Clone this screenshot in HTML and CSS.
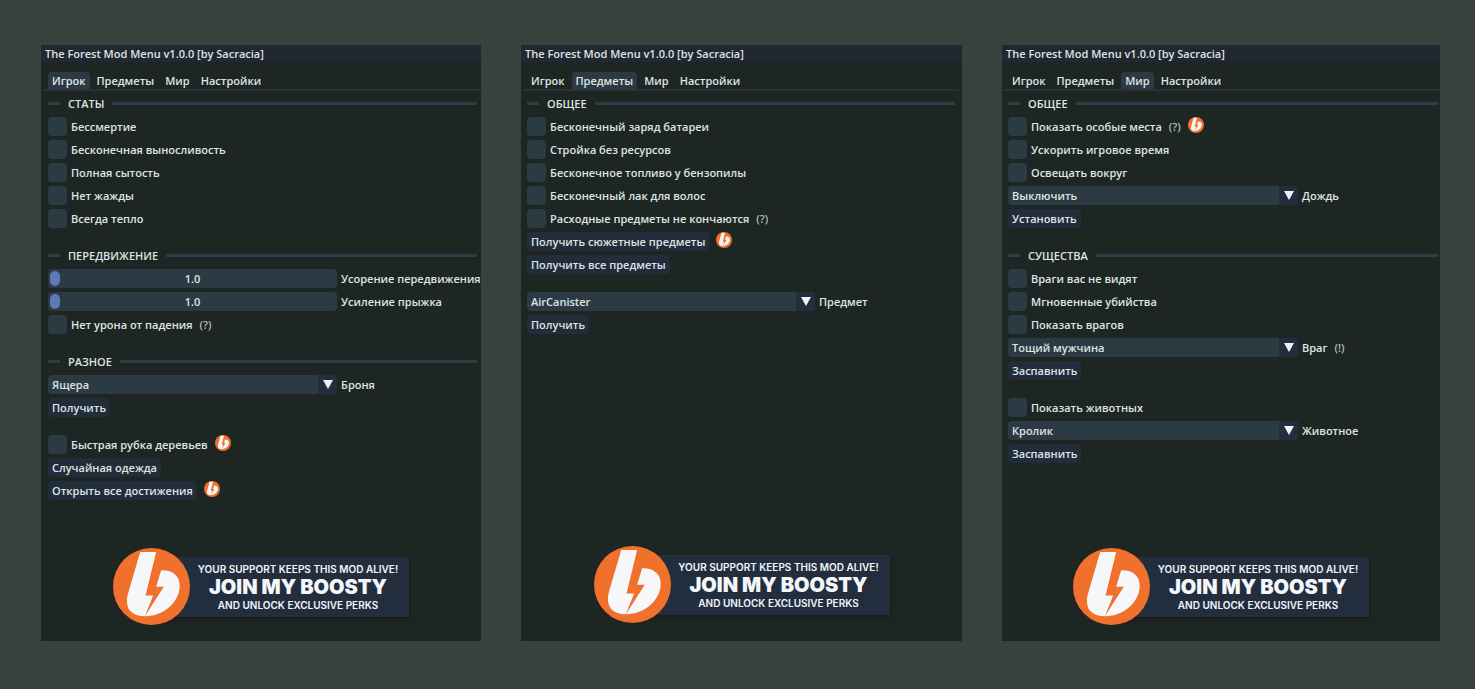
FILE: index.html
```html
<!DOCTYPE html>
<html lang="ru">
<head>
<meta charset="utf-8">
<title>The Forest Mod Menu</title>
<link rel="stylesheet" href="styles.css">
</head>
<body>
<svg class="defs" aria-hidden="true">
  <symbol id="boosty" viewBox="0 0 232 232">
    <circle cx="116" cy="116" r="116" fill="#f0702c"/>
    <path fill="#f6f7f9" d="M82 12H130L98 143H121L96 206C62 205 42 191 42 160C42 149 44 141 48 128Z"/>
    <path fill="#f6f7f9" d="M145 67C181 66 201 84 201 114C201 160 157 205 96 206L153 117H130Z"/>
  </symbol>
  <symbol id="arrow" viewBox="0 0 10 9"><path fill="#edf2f8" d="M0 0H10L5 9Z"/></symbol>
</svg>
<main class="board">

  <section class="panel player">
    <h1 class="title">The Forest Mod Menu v1.0.0 [by Sacracia]</h1>
    <nav class="tabs">
      <button class="tab active">Игрок</button><button class="tab">Предметы</button><button class="tab">Мир</button><button class="tab">Настройки</button>
    </nav>
    <div class="content">
      <h2 class="sep">СТАТЫ</h2>
      <label class="row"><input type="checkbox" class="check">Бессмертие</label>
      <label class="row"><input type="checkbox" class="check">Бесконечная выносливость</label>
      <label class="row"><input type="checkbox" class="check">Полная сытость</label>
      <label class="row"><input type="checkbox" class="check">Нет жажды</label>
      <label class="row"><input type="checkbox" class="check">Всегда тепло</label>

      <h2 class="sep spaced">ПЕРЕДВИЖЕНИЕ</h2>
      <div class="field">
        <div class="frame"><input id="speed" class="slider" type="range" min="1" max="10" step="0.1" value="1"><output class="value" for="speed">1.0</output></div>
        <label for="speed">Усорение передвижения</label>
      </div>
      <div class="field">
        <div class="frame"><input id="jump" class="slider" type="range" min="1" max="10" step="0.1" value="1"><output class="value" for="jump">1.0</output></div>
        <label for="jump">Усиление прыжка</label>
      </div>
      <label class="row"><input type="checkbox" class="check">Нет урона от падения<span class="hint">(?)</span></label>

      <h2 class="sep spaced">РАЗНОЕ</h2>
      <div class="field">
        <div class="frame"><select id="armor" class="select"><option>Ящера</option></select><span class="drop"><svg><use href="#arrow"/></svg></span></div>
        <label for="armor">Броня</label>
      </div>
      <div class="row"><button class="btn">Получить</button></div>
      <label class="row spaced"><input type="checkbox" class="check">Быстрая рубка деревьев<svg class="badge"><use href="#boosty"/></svg></label>
      <div class="row"><button class="btn">Случайная одежда</button></div>
      <div class="row"><button class="btn">Открыть все достижения</button><svg class="badge"><use href="#boosty"/></svg></div>
    </div>
    <a class="banner" href="#">
      <svg class="logo"><use href="#boosty"/></svg>
      <span class="plate"><span class="small">YOUR SUPPORT KEEPS THIS MOD ALIVE!</span><strong class="big">JOIN MY BOOSTY</strong><span class="small">AND UNLOCK EXCLUSIVE PERKS</span></span>
    </a>
  </section>

  <section class="panel items">
    <h1 class="title">The Forest Mod Menu v1.0.0 [by Sacracia]</h1>
    <nav class="tabs">
      <button class="tab">Игрок</button><button class="tab active">Предметы</button><button class="tab">Мир</button><button class="tab">Настройки</button>
    </nav>
    <div class="content">
      <h2 class="sep">ОБЩЕЕ</h2>
      <label class="row"><input type="checkbox" class="check">Бесконечный заряд батареи</label>
      <label class="row"><input type="checkbox" class="check">Стройка без ресурсов</label>
      <label class="row"><input type="checkbox" class="check">Бесконечное топливо у бензопилы</label>
      <label class="row"><input type="checkbox" class="check">Бесконечный лак для волос</label>
      <label class="row"><input type="checkbox" class="check">Расходные предметы не кончаются<span class="hint">(?)</span></label>
      <div class="row"><button class="btn">Получить сюжетные предметы</button><svg class="badge"><use href="#boosty"/></svg></div>
      <div class="row"><button class="btn">Получить все предметы</button></div>
      <div class="field spaced">
        <div class="frame"><select id="item" class="select"><option>AirCanister</option></select><span class="drop"><svg><use href="#arrow"/></svg></span></div>
        <label for="item">Предмет</label>
      </div>
      <div class="row"><button class="btn">Получить</button></div>
    </div>
    <a class="banner" href="#">
      <svg class="logo"><use href="#boosty"/></svg>
      <span class="plate"><span class="small">YOUR SUPPORT KEEPS THIS MOD ALIVE!</span><strong class="big">JOIN MY BOOSTY</strong><span class="small">AND UNLOCK EXCLUSIVE PERKS</span></span>
    </a>
  </section>

  <section class="panel world">
    <h1 class="title">The Forest Mod Menu v1.0.0 [by Sacracia]</h1>
    <nav class="tabs">
      <button class="tab">Игрок</button><button class="tab">Предметы</button><button class="tab active">Мир</button><button class="tab">Настройки</button>
    </nav>
    <div class="content">
      <h2 class="sep">ОБЩЕЕ</h2>
      <label class="row"><input type="checkbox" class="check">Показать особые места<span class="hint">(?)</span><svg class="badge"><use href="#boosty"/></svg></label>
      <label class="row"><input type="checkbox" class="check">Ускорить игровое время</label>
      <label class="row"><input type="checkbox" class="check">Освещать вокруг</label>
      <div class="field">
        <div class="frame"><select id="rain" class="select"><option>Выключить</option></select><span class="drop"><svg><use href="#arrow"/></svg></span></div>
        <label for="rain">Дождь</label>
      </div>
      <div class="row"><button class="btn">Установить</button></div>

      <h2 class="sep spaced">СУЩЕСТВА</h2>
      <label class="row"><input type="checkbox" class="check">Враги вас не видят</label>
      <label class="row"><input type="checkbox" class="check">Мгновенные убийства</label>
      <label class="row"><input type="checkbox" class="check">Показать врагов</label>
      <div class="field">
        <div class="frame"><select id="enemy" class="select"><option>Тощий мужчина</option></select><span class="drop"><svg><use href="#arrow"/></svg></span></div>
        <label for="enemy">Враг<span class="hint">(!)</span></label>
      </div>
      <div class="row"><button class="btn">Заспавнить</button></div>
      <label class="row spaced"><input type="checkbox" class="check">Показать животных</label>
      <div class="field">
        <div class="frame"><select id="animal" class="select"><option>Кролик</option></select><span class="drop"><svg><use href="#arrow"/></svg></span></div>
        <label for="animal">Животное</label>
      </div>
      <div class="row"><button class="btn">Заспавнить</button></div>
    </div>
    <a class="banner" href="#">
      <svg class="logo"><use href="#boosty"/></svg>
      <span class="plate"><span class="small">YOUR SUPPORT KEEPS THIS MOD ALIVE!</span><strong class="big">JOIN MY BOOSTY</strong><span class="small">AND UNLOCK EXCLUSIVE PERKS</span></span>
    </a>
  </section>

</main>
</body>
</html>
```
FILE: styles.css
```css
* { box-sizing: border-box; }

body {
  margin: 0;
  background: #37423e;
  color: #dde5e3;
  font: 600 11px/19px "Open Sans", "Noto Sans", sans-serif;
}

button, select, input { font: inherit; color: inherit; margin: 0; }

.defs { position: absolute; width: 0; height: 0; }

.board {
  min-height: 100vh;
  padding: 45px 35px 48px 41px;
  display: grid;
  grid-template-columns: minmax(0, 440fr) minmax(0, 441fr) minmax(0, 438fr);
  gap: 40px;
}

.panel {
  background: #1e2623;
  display: flex;
  flex-direction: column;
}

.title {
  margin: 0 0 10px;
  padding: 0 4px;
  background: #212831;
  font: inherit;
  line-height: 17px;
}

.tabs {
  margin-left: 2px;
  padding-left: 4px;
  display: flex;
  gap: 3px;
  border-bottom: 2px solid #29323a;
}

.tab {
  padding: 0 4px;
  border: 0;
  border-radius: 4px 4px 0 0;
  background: none;
  line-height: 17px;
}

.tab.active { background: #2d3a45; }

.content {
  padding: 3px 2px 16px 6px;
  display: flex;
  flex-direction: column;
  gap: 4px;
  white-space: nowrap;
}

.player .tabs { margin-left: 3px; }
.player .content { padding-left: 7px; padding-right: 4px; }
.items .tabs { margin-right: 3px; }
.items .content { padding-right: 7px; }

.spaced { margin-top: 14px; }

.sep {
  margin-bottom: 0;
  font: inherit;
  display: flex;
  align-items: center;
  gap: 8px;
}
.sep:not(.spaced) { margin-top: 0; }
.sep::before, .sep::after {
  content: "";
  height: 3px;
  background: #2f3b46;
}
.sep::before { width: 12px; }
.sep::after { flex: 1; }

.row { display: flex; align-items: center; }

.check {
  appearance: none;
  width: 19px;
  height: 19px;
  margin-right: 4px;
  border-radius: 4px;
  background: #2c3b43;
}
.check:checked { box-shadow: inset 0 0 0 5px #2c3b43; background: #5d7ab8; }

.hint { margin-left: 7px; color: #b3bbb9; }

.badge {
  width: 16px;
  height: 16px;
  margin-left: 7px;
  align-self: flex-start;
}

.btn {
  padding: 0 4px;
  border: 0;
  border-radius: 4px;
  background: #222c3a;
}

.field {
  display: grid;
  grid-template-columns: minmax(0, 1fr) 136px;
  gap: 4px;
}

.frame {
  position: relative;
  display: flex;
  height: 19px;
  border-radius: 4px;
  background: #2c3b43;
  overflow: hidden;
}

.select {
  appearance: none;
  flex: 1;
  padding: 0 23px 0 4px;
  border: 0;
  background: none;
}

.drop {
  position: absolute;
  inset: 0 0 0 auto;
  width: 19px;
  display: grid;
  place-items: center;
  background: #222e3e;
  pointer-events: none;
}
.drop svg { width: 10px; height: 9px; }

.slider {
  appearance: none;
  flex: 1;
  min-width: 0;
  padding: 0 2px;
  background: none;
}
.slider::-webkit-slider-thumb {
  appearance: none;
  width: 10px;
  height: 15px;
  border-radius: 5px;
  background: #5d7ab5;
}

.value {
  position: absolute;
  inset: 0;
  text-align: center;
  pointer-events: none;
}

.banner {
  margin: auto auto 16px;
  display: flex;
  align-items: center;
  color: #f3f6fa;
  text-decoration: none;
  white-space: nowrap;
}
.items .banner { margin-bottom: 18px; }

.logo {
  width: 77px;
  height: 77px;
  flex: none;
  z-index: 1;
}

.plate {
  width: 258px;
  height: 60px;
  margin-left: -39px;
  padding-left: 36px;
  display: flex;
  flex-direction: column;
  align-items: center;
  justify-content: center;
  background: #222e3e;
  box-shadow: 0 2px 4px #141a1a;
}

.small { font: 600 10px/18px Inter, sans-serif; }
.big { font: 900 20px/18px Inter, sans-serif; }
```
